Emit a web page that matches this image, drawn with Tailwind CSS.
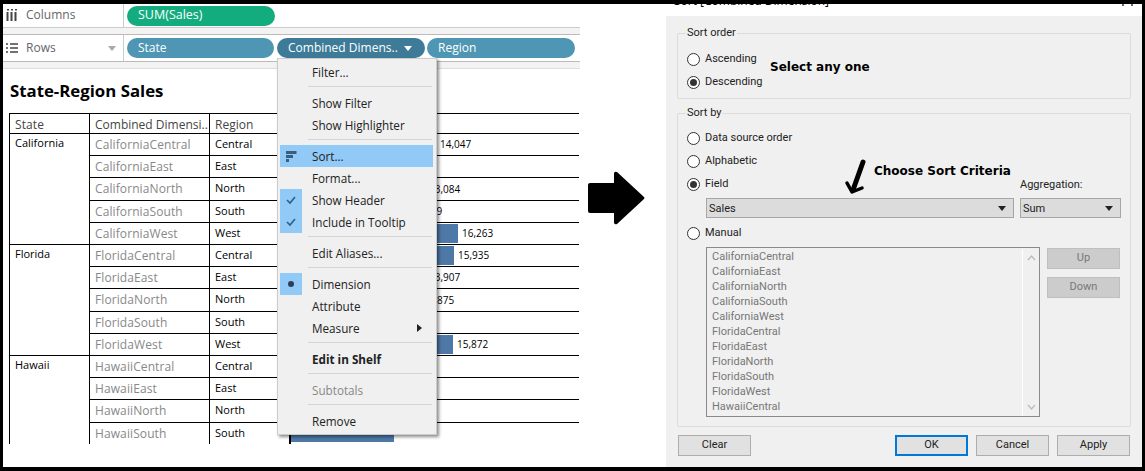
<!DOCTYPE html>
<html><head><meta charset="utf-8"><script src="https://cdn.jsdelivr.net/npm/@tailwindcss/browser@4"></script></head>
<body class="m-0 bg-black">
<div class="w-[1145px] h-[471px] overflow-hidden bg-white flex border-y-[4px] border-l-[3px] border-r-[3px] border-black font-['Open_Sans',sans-serif] text-[12px] text-[#333]">
  <div class="relative w-[577px] shrink-0 flex flex-col">
    <div class="h-[24px] flex items-center border-b border-[#ccc]">
      <div class="w-[121px] h-full flex items-center border-r border-[#ccc] pl-[3px] gap-[8px] text-[#666] pb-[2px]">
        <svg width="12" height="12" viewBox="0 0 12 12"><path d="M1.5 3v9M5.5 3v9M9.5 3v9" stroke="#444" stroke-width="2"/><path d="M1 0h2v1.5H1zM5 0h2v1.5H5zM9 0h2v1.5H9z" fill="#444"/></svg>
        <span>Columns</span>
      </div>
      <div class="ml-[3px] w-[148px] h-[20px] rounded-full bg-[#12ac7f] text-white text-[12.5px] pl-[11px] flex items-center">SUM(Sales)</div>
    </div>
    <div class="h-[6px] bg-[#f3f3f3]"></div>
    <div class="h-[28px] flex items-center border-y border-[#bbb] bg-white">
      <div class="w-[121px] h-full flex items-center border-r border-[#ccc] pl-[3px] gap-[8px] text-[#666]">
        <svg width="12" height="10" viewBox="0 0 12 10"><path d="M0 1h2M4 1h8M0 5h2M4 5h8M0 9h2M4 9h8" stroke="#444" stroke-width="1.6"/></svg>
        <span class="flex-1">Rows</span>
        <svg class="mr-[7px]" width="8" height="5" viewBox="0 0 8 5"><path d="M0 0h8L4 5z" fill="#aaa"/></svg>
      </div>
      <div class="ml-[3px] w-[147px] h-[20px] rounded-full bg-[#4e96b4] text-white pl-[11px] flex items-center">State</div>
      <div class="ml-[3px] w-[148px] h-[20px] rounded-full bg-[#3d7b98] text-white pl-[11px] flex items-center gap-[6px]">Combined Dimens..<svg width="8" height="5" viewBox="0 0 8 5"><path d="M0 0h8L4 5z" fill="#fff"/></svg></div>
      <div class="ml-[2px] w-[148px] h-[20px] rounded-full bg-[#4e96b4] text-white pl-[11px] flex items-center">Region</div>
    </div>
    <div class="h-[7px] border-b border-[#ddd] bg-[#f3f3f3]"></div>
    <div class="pl-[7px] pt-[10px] h-[44px] text-[16.8px] leading-[24px] font-bold text-black">State-Region Sales</div>
    <div class="ml-[6px] w-[570px] grid grid-cols-[80px_120px_80px_289px] grid-rows-[20px_22px_22px_23px_22px_22px_22px_22px_23px_22px_22px_22px_22px_23px_21px] border-t border-l border-black text-black overflow-hidden">
      <div class="border-r border-b border-black pl-[5px] text-[#444] leading-[21px] tracking-[0.1px]">State</div>
      <div class="border-r border-b border-black pl-[5px] text-[#444] leading-[21px]">Combined Dimensi..</div>
      <div class="border-r border-b border-black pl-[5px] text-[#444] leading-[21px]">Region</div>
      <div class="border-b border-black"></div>

      <div class="row-span-5 border-r border-b border-black pl-[5px] text-[11px] leading-[18px]">California</div>
      <div class="border-r border-b border-black pl-[5px] text-[#888] leading-[22px] tracking-[0.1px]">CaliforniaCentral</div>
      <div class="border-r border-b border-black pl-[5px] text-[11px] leading-[20px]">Central</div>
      <div class="border-b border-black border-l flex items-center"><div class="w-[145px] h-[19px] bg-[#4e79a7]"></div><span class="ml-[4px] text-[10px]">14,047</span></div>
      <div class="border-r border-b border-black pl-[5px] text-[#888] leading-[22px] tracking-[0.1px]">CaliforniaEast</div>
      <div class="border-r border-b border-black pl-[5px] text-[11px] leading-[20px]">East</div>
      <div class="border-b border-black border-l flex items-center"><div class="w-[100px] h-[19px] bg-[#4e79a7]"></div></div>
      <div class="border-r border-b border-black pl-[5px] text-[#888] leading-[22px] tracking-[0.1px]">CaliforniaNorth</div>
      <div class="border-r border-b border-black pl-[5px] text-[11px] leading-[20px]">North</div>
      <div class="border-b border-black border-l flex items-center"><div class="w-[134px] h-[19px] bg-[#4e79a7]"></div><span class="ml-[4px] text-[10px]">13,084</span></div>
      <div class="border-r border-b border-black pl-[5px] text-[#888] leading-[22px] tracking-[0.1px]">CaliforniaSouth</div>
      <div class="border-r border-b border-black pl-[5px] text-[11px] leading-[20px]">South</div>
      <div class="border-b border-black border-l flex items-center"><div class="w-[116px] h-[19px] bg-[#4e79a7]"></div><span class="ml-[4px] text-[10px]">11,139</span></div>
      <div class="border-r border-b border-black pl-[5px] text-[#888] leading-[22px] tracking-[0.1px]">CaliforniaWest</div>
      <div class="border-r border-b border-black pl-[5px] text-[11px] leading-[20px]">West</div>
      <div class="border-b border-black border-l flex items-center"><div class="w-[167px] h-[19px] bg-[#4e79a7]"></div><span class="ml-[4px] text-[10px]">16,263</span></div>

      <div class="row-span-5 border-r border-b border-black pl-[5px] text-[11px] leading-[18px]">Florida</div>
      <div class="border-r border-b border-black pl-[5px] text-[#888] leading-[22px] tracking-[0.1px]">FloridaCentral</div>
      <div class="border-r border-b border-black pl-[5px] text-[11px] leading-[20px]">Central</div>
      <div class="border-b border-black border-l flex items-center"><div class="w-[163px] h-[19px] bg-[#4e79a7]"></div><span class="ml-[4px] text-[10px]">15,935</span></div>
      <div class="border-r border-b border-black pl-[5px] text-[#888] leading-[22px] tracking-[0.1px]">FloridaEast</div>
      <div class="border-r border-b border-black pl-[5px] text-[11px] leading-[20px]">East</div>
      <div class="border-b border-black border-l flex items-center"><div class="w-[134px] h-[19px] bg-[#4e79a7]"></div><span class="ml-[4px] text-[10px]">13,907</span></div>
      <div class="border-r border-b border-black pl-[5px] text-[#888] leading-[22px] tracking-[0.1px]">FloridaNorth</div>
      <div class="border-r border-b border-black pl-[5px] text-[11px] leading-[20px]">North</div>
      <div class="border-b border-black border-l flex items-center"><div class="w-[128px] h-[19px] bg-[#4e79a7]"></div><span class="ml-[4px] text-[10px]">12,875</span></div>
      <div class="border-r border-b border-black pl-[5px] text-[#888] leading-[22px] tracking-[0.1px]">FloridaSouth</div>
      <div class="border-r border-b border-black pl-[5px] text-[11px] leading-[20px]">South</div>
      <div class="border-b border-black border-l flex items-center"></div>
      <div class="border-r border-b border-black pl-[5px] text-[#888] leading-[22px] tracking-[0.1px]">FloridaWest</div>
      <div class="border-r border-b border-black pl-[5px] text-[11px] leading-[20px]">West</div>
      <div class="border-b border-black border-l flex items-center"><div class="w-[162px] h-[19px] bg-[#4e79a7]"></div><span class="ml-[4px] text-[10px]">15,872</span></div>

      <div class="row-span-4 border-r border-black pl-[5px] text-[11px] leading-[18px]">Hawaii</div>
      <div class="border-r border-b border-black pl-[5px] text-[#888] leading-[22px] tracking-[0.1px]">HawaiiCentral</div>
      <div class="border-r border-b border-black pl-[5px] text-[11px] leading-[20px]">Central</div>
      <div class="border-b border-black border-l"></div>
      <div class="border-r border-b border-black pl-[5px] text-[#888] leading-[22px] tracking-[0.1px]">HawaiiEast</div>
      <div class="border-r border-b border-black pl-[5px] text-[11px] leading-[20px]">East</div>
      <div class="border-b border-black border-l"></div>
      <div class="border-r border-b border-black pl-[5px] text-[#888] leading-[22px] tracking-[0.1px]">HawaiiNorth</div>
      <div class="border-r border-b border-black pl-[5px] text-[11px] leading-[20px]">North</div>
      <div class="border-b border-black border-l"></div>
      <div class="border-r border-black pl-[5px] text-[#888] leading-[22px] tracking-[0.1px]">HawaiiSouth</div>
      <div class="border-r border-black pl-[5px] text-[11px] leading-[20px]">South</div>
      <div class="border-black border-l"><div class="w-[103px] h-[19px] bg-[#4e79a7]"></div></div>
    </div>

    <div class="absolute left-[274px] top-[54px] w-[160px] h-[377px] bg-[#f0f0f0] border border-[#ccc] shadow-[2px_2px_3px_rgba(0,0,0,0.45)] pt-[2px] text-[#222] text-[11.7px] z-10">
      <div class="h-[22px] pl-[34px] leading-[22px]">Filter...</div>
      <div class="h-[9px] ml-[30px] mr-[4px] pt-[3px]"><div class="h-px bg-[#d5d5d5]"></div></div>
      <div class="h-[22px] pl-[34px] leading-[22px]">Show Filter</div>
      <div class="h-[22px] pl-[34px] leading-[22px]">Show Highlighter</div>
      <div class="h-[9px] ml-[30px] mr-[4px] pt-[3px]"><div class="h-px bg-[#d5d5d5]"></div></div>
      <div class="h-[22px] ml-[2px] mr-[3px] pl-[32px] leading-[22px] bg-[#91c9f7] relative"><svg class="absolute left-[6px] top-[6px]" width="11" height="11" viewBox="0 0 11 11"><path d="M0 0h10.5v3H0zM0 4h7v3H0zM0 8h3v3H0z" fill="#3b5e7c"/></svg>Sort...</div>
      <div class="h-[22px] pl-[34px] leading-[22px]">Format...</div>
      <div class="h-[22px] pl-[34px] leading-[22px] relative"><div class="absolute left-[2px] top-0 w-[22px] h-[44px] bg-[#91c9f7] flex flex-col"><svg class="m-[5px]" width="12" height="12" viewBox="0 0 12 12"><path d="M2 6l3 3 5-6" fill="none" stroke="#2d5f86" stroke-width="1.6"/></svg><svg class="m-[5px]" width="12" height="12" viewBox="0 0 12 12"><path d="M2 6l3 3 5-6" fill="none" stroke="#2d5f86" stroke-width="1.6"/></svg></div><span class="relative">Show Header</span></div>
      <div class="h-[22px] pl-[34px] leading-[22px]">Include in Tooltip</div>
      <div class="h-[9px] ml-[30px] mr-[4px] pt-[3px]"><div class="h-px bg-[#d5d5d5]"></div></div>
      <div class="h-[22px] pl-[34px] leading-[22px]">Edit Aliases...</div>
      <div class="h-[9px] ml-[30px] mr-[4px] pt-[3px]"><div class="h-px bg-[#d5d5d5]"></div></div>
      <div class="h-[22px] pl-[34px] leading-[22px] relative"><div class="absolute left-[2px] top-0 w-[22px] h-[22px] bg-[#91c9f7] flex items-center justify-center"><div class="w-[6px] h-[6px] rounded-full bg-[#2a3f55]"></div></div>Dimension</div>
      <div class="h-[22px] pl-[34px] leading-[22px]">Attribute</div>
      <div class="h-[22px] pl-[34px] leading-[22px] relative">Measure<svg class="absolute right-[14px] top-[7px]" width="5" height="8" viewBox="0 0 5 8"><path d="M0 0l5 4-5 4z" fill="#222"/></svg></div>
      <div class="h-[9px] ml-[30px] mr-[4px] pt-[3px]"><div class="h-px bg-[#d5d5d5]"></div></div>
      <div class="h-[22px] pl-[34px] leading-[22px] font-bold">Edit in Shelf</div>
      <div class="h-[9px] ml-[30px] mr-[4px] pt-[3px]"><div class="h-px bg-[#d5d5d5]"></div></div>
      <div class="h-[22px] pl-[34px] leading-[22px] text-[#888]">Subtotals</div>
      <div class="h-[9px] ml-[30px] mr-[4px] pt-[3px]"><div class="h-px bg-[#d5d5d5]"></div></div>
      <div class="h-[22px] pl-[34px] leading-[22px]">Remove</div>
    </div>
  </div>

  <div class="w-[86px] shrink-0 pl-[8px] pt-[167px]">
    <svg width="58" height="55" viewBox="0 0 58 55"><path d="M2 12h24V2q1-2 3-1l27 25q1 1 0 2L29 53q-2 1-3-1V42H2q-2 0-2-2V14q0-2 2-2z" fill="#000"/></svg>
  </div>

  <div class="flex-1 flex flex-col font-['Roboto',sans-serif] text-[#222] text-[11px]">
    <div class="relative h-[12px] bg-white overflow-hidden">
      <span class="absolute left-[8px] top-[-10px] leading-[14px] text-[12px] text-black font-['Open_Sans',sans-serif]">Sort [Combined Dimension]</span>
      <span class="absolute left-[456px] top-0 w-[2px] h-[2px] bg-[#666]"></span>
      <span class="absolute left-[465px] top-0 w-[2px] h-[2px] bg-[#666]"></span>
    </div>
    <div class="flex-1 bg-[#f0f0f0] px-[11px] pt-[17px]">
    <div class="relative h-[66px] border border-[#dcdcdc] rounded-[2px]">
      <span class="absolute left-[8px] top-[-8px] bg-[#f0f0f0] px-px leading-[14px]">Sort order</span>
      <div class="absolute left-[9px] top-[17px] flex items-center gap-[5px]"><div class="w-[13px] h-[13px] rounded-full border border-[#333] bg-white"></div>Ascending</div>
      <div class="absolute left-[9px] top-[40px] flex items-center gap-[5px]"><div class="w-[13px] h-[13px] rounded-full border border-[#333] bg-white flex items-center justify-center"><div class="w-[7px] h-[7px] rounded-full bg-[#333]"></div></div>Descending</div>
      <span class="absolute left-[92px] top-[24px] font-['DejaVu_Sans',sans-serif] font-bold text-[12px] text-black">Select any one</span>
    </div>
    <div class="relative mt-[14px] h-[314px] border border-[#dcdcdc] rounded-[2px]">
      <span class="absolute left-[8px] top-[-8px] bg-[#f0f0f0] px-px leading-[14px]">Sort by</span>
      <div class="absolute left-[9px] top-[16px] flex items-center gap-[5px]"><div class="w-[13px] h-[13px] rounded-full border border-[#333] bg-white"></div>Data source order</div>
      <div class="absolute left-[9px] top-[39px] flex items-center gap-[5px]"><div class="w-[13px] h-[13px] rounded-full border border-[#333] bg-white"></div>Alphabetic</div>
      <div class="absolute left-[9px] top-[62px] flex items-center gap-[5px]"><div class="w-[13px] h-[13px] rounded-full border border-[#333] bg-white flex items-center justify-center"><div class="w-[7px] h-[7px] rounded-full bg-[#333]"></div></div>Field</div>
      <div class="absolute left-[9px] top-[111px] flex items-center gap-[5px]"><div class="w-[13px] h-[13px] rounded-full border border-[#333] bg-white"></div>Manual</div>
      <span class="absolute left-[196px] top-[48px] font-['DejaVu_Sans',sans-serif] font-bold text-[12px] text-black">Choose Sort Criteria</span>
      <svg class="absolute left-[166px] top-[45px]" width="24" height="38" viewBox="0 0 24 38"><path d="M19 3L9 31" stroke="#000" stroke-width="5" stroke-linecap="round"/><path d="M3 24l5 9 10-4" fill="none" stroke="#000" stroke-width="3.5" stroke-linecap="round" stroke-linejoin="round"/></svg>
      <span class="absolute left-[342px] top-[63px]">Aggregation:</span>
      <div class="absolute left-[28px] top-[84px] w-[308px] h-[20px] bg-[#dcdcdc] border border-[#a6a6a6] pl-[2px] leading-[19px] flex justify-between items-center pr-[7px]">Sales<svg width="8" height="5" viewBox="0 0 8 5"><path d="M0 0h8L4 5z" fill="#222"/></svg></div>
      <div class="absolute left-[342px] top-[84px] w-[101px] h-[20px] bg-[#dcdcdc] border border-[#a6a6a6] pl-[2px] leading-[19px] flex justify-between items-center pr-[7px]">Sum<svg width="8" height="5" viewBox="0 0 8 5"><path d="M0 0h8L4 5z" fill="#222"/></svg></div>
      <div class="absolute left-[28px] top-[133px] w-[334px] h-[170px] border border-[#8a8a8a] pl-[5px] pt-px text-[#777] leading-[15px] flex justify-between">
        <div><div>CaliforniaCentral</div><div>CaliforniaEast</div><div>CaliforniaNorth</div><div>CaliforniaSouth</div><div>CaliforniaWest</div><div>FloridaCentral</div><div>FloridaEast</div><div>FloridaNorth</div><div>FloridaSouth</div><div>FloridaWest</div><div>HawaiiCentral</div></div>
        <div class="w-[17px] border-l border-white flex flex-col justify-between items-center py-[6px]"><svg width="9" height="6" viewBox="0 0 9 6"><path d="M1 5l3.5-4L8 5" fill="none" stroke="#bbb" stroke-width="1.3"/></svg><svg width="9" height="6" viewBox="0 0 9 6"><path d="M1 1l3.5 4L8 1" fill="none" stroke="#bbb" stroke-width="1.3"/></svg></div>
      </div>
      <div class="absolute left-[369px] top-[134px] w-[73px] h-[21px] bg-[#cccccc] border border-[#bfbfbf] text-[#777] flex items-center justify-center">Up</div>
      <div class="absolute left-[369px] top-[163px] w-[73px] h-[21px] bg-[#cccccc] border border-[#bfbfbf] text-[#777] flex items-center justify-center">Down</div>
    </div>
    <div class="flex mt-[8px] gap-[8px] pl-px pr-px">
      <div class="w-[73px] h-[21px] bg-[#e1e1e1] border border-[#adadad] flex items-center justify-center">Clear</div>
      <div class="flex-1"></div>
      <div class="w-[73px] h-[21px] bg-[#e1e1e1] border-2 border-[#0078d7] flex items-center justify-center">OK</div>
      <div class="w-[73px] h-[21px] bg-[#e1e1e1] border border-[#adadad] flex items-center justify-center">Cancel</div>
      <div class="w-[73px] h-[21px] bg-[#e1e1e1] border border-[#adadad] flex items-center justify-center">Apply</div>
    </div>
    </div>
  </div>
</div>
</body></html>
